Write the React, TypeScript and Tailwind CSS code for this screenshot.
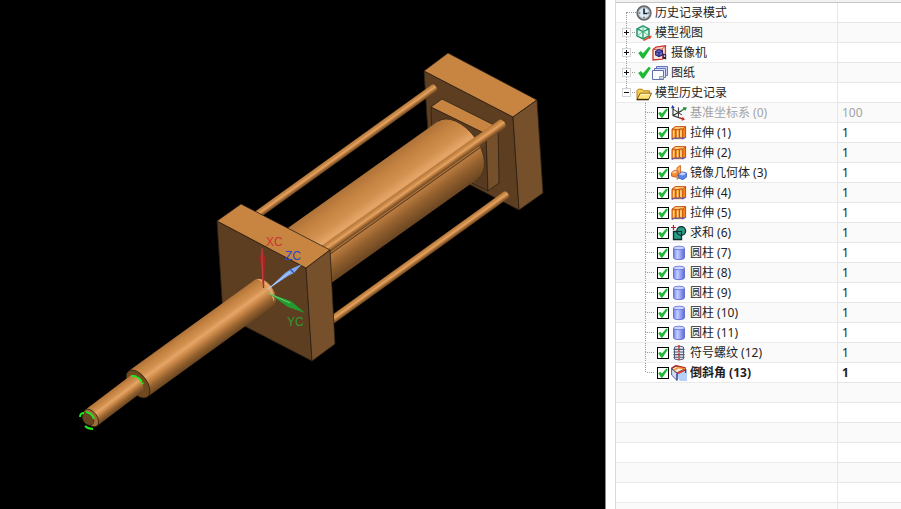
import { ReactNode, useState } from "react";

type IconName =
  | "clock"
  | "views"
  | "camera"
  | "sheets"
  | "folder"
  | "csys"
  | "extrude"
  | "mirror"
  | "unite"
  | "cylinder"
  | "thread"
  | "chamfer";

interface RootNode {
  label: string;
  icon: IconName;
  expander?: "+" | "-";
  ticked?: boolean;
}

interface Feature {
  label: string;
  icon: IconName;
  value: string;
  muted?: boolean;
  current?: boolean;
}

const rootNodes: RootNode[] = [
  { label: "历史记录模式", icon: "clock" },
  { label: "模型视图", icon: "views", expander: "+" },
  { label: "摄像机", icon: "camera", expander: "+", ticked: true },
  { label: "图纸", icon: "sheets", expander: "+", ticked: true },
  { label: "模型历史记录", icon: "folder", expander: "-" },
];

const features: Feature[] = [
  { label: "基准坐标系 (0)", icon: "csys", value: "100", muted: true },
  { label: "拉伸 (1)", icon: "extrude", value: "1" },
  { label: "拉伸 (2)", icon: "extrude", value: "1" },
  { label: "镜像几何体 (3)", icon: "mirror", value: "1" },
  { label: "拉伸 (4)", icon: "extrude", value: "1" },
  { label: "拉伸 (5)", icon: "extrude", value: "1" },
  { label: "求和 (6)", icon: "unite", value: "1" },
  { label: "圆柱 (7)", icon: "cylinder", value: "1" },
  { label: "圆柱 (8)", icon: "cylinder", value: "1" },
  { label: "圆柱 (9)", icon: "cylinder", value: "1" },
  { label: "圆柱 (10)", icon: "cylinder", value: "1" },
  { label: "圆柱 (11)", icon: "cylinder", value: "1" },
  { label: "符号螺纹 (12)", icon: "thread", value: "1" },
  { label: "倒斜角 (13)", icon: "chamfer", value: "1", current: true },
];

const emptyRows = [0, 1, 2, 3, 4, 5, 6];

const iconShapes: Record<IconName, ReactNode> = {
  clock: (
    <>
      <circle cx="8" cy="8" r="6.7" fill="#dcebf5" stroke="#6a6d70" strokeWidth="2" />
      <circle cx="8" cy="8" r="5.4" fill="none" stroke="#aeb9c1" strokeWidth="0.8" />
      <path d="M8 2.8v1.6M8 11.6v1.6M2.8 8h1.6M11.6 8h1.6" stroke="#444" strokeWidth="1" />
      <path d="M8 4V8.5h3.4" fill="none" stroke="#14283c" strokeWidth="1.6" />
    </>
  ),
  views: (
    <>
      <path d="M7 .9l6 3v7l-6 3-6-3v-7z" fill="#e0f8ec" stroke="#219467" strokeWidth="1.5" />
      <path d="M1 3.9l6 2.6 6-2.6M7 6.5v7.4" fill="none" stroke="#219467" strokeWidth="1.3" />
      <path d="M7 .9v5.6M1 10.9l6-4.4 6 4.4" fill="none" stroke="#4fb48b" strokeWidth="0.8" />
      <path d="M7.5 15.4l6-3" stroke="#e0402a" strokeWidth="1.6" />
      <path d="M11.6 11.3l4.4-.6-2.2 3.5z" fill="#e0402a" />
    </>
  ),
  camera: (
    <>
      <path d="M1 4.6L4 2l9.4-1.2v10.6l-3 2.8L1 15z" fill="#fdeae6" stroke="#c9382b" strokeWidth="1.3" />
      <path d="M1 4.6l9.4-.6 3-3.2M10.4 4v9.8" fill="none" stroke="#d64a3a" strokeWidth="1" />
      <path d="M3.6 6.4l3-1.8 4 1.4v3.8L7 11.6l-3.4-1.8z" fill="#6c6cc6" stroke="#29297c" strokeWidth="1.1" />
      <path d="M3.6 6.4L7 8l3.6-2M7 8v3.6" fill="none" stroke="#1e1e66" strokeWidth="0.9" />
      <path d="M10.6 8.6l3.6.8v5l-3.6-.8z" fill="#2a2340" />
      <path d="M11.8 10.2l1.4.3v1.4l-1.4-.3z" fill="#fff" />
    </>
  ),
  sheets: (
    <>
      <path d="M4.5 1.5h11v9h-11z" fill="#c9d3f3" stroke="#6474b8" />
      <path d="M2.5 3.5h11v9h-11z" fill="#dde4fa" stroke="#6474b8" />
      <path d="M.5 5.5h11v9H.5z" fill="#fafbff" stroke="#5e6eb2" />
      <path d="M7.5 14v-2.5h4V14z" fill="#cfe2d8" stroke="#7b8cae" strokeWidth="0.8" />
    </>
  ),
  folder: (
    <>
      <path d="M1 14V5.4l1.2-1.2h4l1.2 1.6h6v2.4" fill="#f7cf52" stroke="#b5801a" strokeWidth="1" />
      <path d="M1 14.4l3.2-6.2h11.4l-3 6.2z" fill="#ffe27a" stroke="#8a5b0c" strokeWidth="1" />
      <path d="M4.8 9.4h8.6" stroke="#fff8cf" strokeWidth="1.1" />
      <path d="M.6 14.6h12.2" stroke="#3f2a08" strokeWidth="1.4" />
    </>
  ),
  csys: (
    <>
      <path d="M2 2v8.6l8 2.9M2 10.6l9-5" fill="none" stroke="#2a2f2a" strokeWidth="1.1" />
      <path d="M2 4l5.4 3.6v4.6M7.4 2.4v5.2M7.4 7.6l3.6 2.4" fill="none" stroke="#333" strokeWidth="1" />
      <path d="M0 3.2L1.6 0l2 3z" fill="#2634b8" />
      <path d="M10.5 5.6l4-2.4M12 3l2.9 0-.9 2.2" fill="none" stroke="#23923e" strokeWidth="1.3" />
      <path d="M8.8 12.8l3.8 1.4M10.6 15.2l2.3-1-1.4-1.8" fill="none" stroke="#c72c24" strokeWidth="1.3" />
    </>
  ),
  extrude: (
    <>
      <path d="M1 4l3.2-2.6h10.6L14 12.8l-2.6 1.4H1z" fill="#f58a1f" />
      <path d="M1.6 4.2l2.8-2.2h9.8l-2.4 1.8z" fill="#ffcf7c" />
      <path d="M2.6 5.4v7M6.6 5.2v7M10 5.2v7" stroke="#ffd98a" strokeWidth="1.6" />
      <path d="M1 4.2v10M4.8 4.4V13M8.4 4.2V13M11.8 4v9.4M14.6 1.8v10.8" stroke="#c04e0e" strokeWidth="1" />
      <path d="M1 4.2l3.2-2.6h10.4l-2.8 2.4q-1.6-.6-3.4.2-1.8.8-3.6.2-1.8-.6-3.8-.2z" fill="none" stroke="#c04e0e" strokeWidth="0.9" />
      <path d="M.8 14.6q2-1.8 4-1.4 1.8.4 3.6-.2 1.8-.6 3.4.8l2.8-1.6" fill="none" stroke="#5557b4" strokeWidth="1.3" />
    </>
  ),
  mirror: (
    <>
      <path d="M6 2.8L9.4.4v10.8L6 14.4z" fill="#ffb566" stroke="#d9691c" strokeWidth="1" />
      <path d="M.4 7.8l3-2.4 3.8.8v4l-3 2-3.8-1.2z" fill="#f58b2e" stroke="#b9501a" strokeWidth="0.8" />
      <path d="M.8 7.9l2.8-2 3 .7-2.6 2z" fill="#ffd09a" />
      <path d="M7.6 9.4l3.2-2.6 4.8 1.2v4l-3.6 2.6-4.4-1.4z" fill="#5b84e6" stroke="#3355b6" strokeWidth="0.8" />
      <path d="M7.9 9.5l3-2.3 4.3 1.1L12 10.6z" fill="#c3d6ff" />
    </>
  ),
  unite: (
    <>
      <path d="M2.5 6.5h8v8h-8z" fill="#2a9a86" stroke="#0c2f2b" strokeWidth="1.3" />
      <circle cx="10.2" cy="6" r="4.4" fill="#2a9a86" stroke="#0c2f2b" strokeWidth="1.3" />
      <path d="M5.8 6.5h4.7v3.9" fill="none" stroke="#0c2f2b" strokeWidth="1.1" />
      <path d="M0 2.5h5M2.5 0v5" stroke="#c01f2e" strokeWidth="1.2" />
    </>
  ),
  cylinder: (
    <>
      <path d="M2.5 3v9.8c0 2.4 11 2.4 11 0V3z" fill="url(#icon-cylinder)" stroke="#6169cf" strokeWidth="0.9" />
      <ellipse cx="8" cy="3" rx="5.5" ry="1.8" fill="#ccd5ff" stroke="#6d78d8" strokeWidth="0.9" />
    </>
  ),
  thread: (
    <>
      <path d="M3.5 2q4.500-2 9 0v12q-4.500 2-9 0z" fill="#e4eaf2" stroke="#55657c" strokeWidth="1" />
      <path d="M2.4 4.4h11.2M2.400 7h11.2M2.400 9.600h11.2M2.400 12.200h11.2" stroke="#4d5b74" strokeWidth="1.100" />
      <path d="M8 0v16" stroke="#d5302c" strokeWidth="1.4" strokeDasharray="4 1 2 1" />
    </>
  ),
  chamfer: (
    <>
      <path d="M5 9l11-5v12H9z" fill="#b4d0fb" />
      <path d="M.6 3.600L6 8v7.400L.600 10z" fill="#d3dcf2" stroke="#44508c" strokeWidth="0.9" />
      <path d="M.6 3.6L5 1l9.600 2.400L6 8z" fill="#f6e4d2" stroke="#2d2d4a" strokeWidth="0.9" />
      <path d="M.2 3.400L4.800.6l9.800 2.400" fill="none" stroke="#b32c24" strokeWidth="1.3" />
      <path d="M2.600 5.200L7.400 2.600l7 1.400" fill="none" stroke="#f0912e" strokeWidth="1.4" />
      <path d="M6 8.600l8.800-3.800" stroke="#d8392a" strokeWidth="1.7" />
      <path d="M6 9v6.600M14.600 4v4" stroke="#2b3c98" strokeWidth="1.1" />
    </>
  ),
};

const NodeIcon = ({ name }: { name: IconName }) => (
  <svg viewBox="0 0 16 16" className="size-4 shrink-0" aria-hidden="true">
    {iconShapes[name]}
  </svg>
);

const Tick = ({ className }: { className: string }) => (
  <svg viewBox="0 0 12 12" className={className} aria-hidden="true">
    <path d="M.2 6.400L2.600 4.600l2 2L10 .6l1.800 1.200L5.400 11.600H3.800z" fill="#1fb937" />
  </svg>
);

const DottedColumn = ({ className }: { className: string }) => (
  <span
    className={`${className} w-px bg-[repeating-linear-gradient(to_bottom,#9a9a9a_0_1px,transparent_1px_2px)]`}
  />
);

const DottedRow = ({ className }: { className: string }) => (
  <span
    className={`${className} h-px bg-[repeating-linear-gradient(to_right,#9a9a9a_0_1px,transparent_1px_2px)]`}
  />
);

interface TreeRowProps {
  children?: ReactNode;
  value?: string;
  textStyle?: string;
}

const TreeRow = ({ children, value, textStyle = "" }: TreeRowProps) => (
  <tr className={`odd:bg-white even:bg-[#fafafa] ${textStyle}`}>
    <td className="border-b border-[#ebebeb] p-0">
      <div className="flex h-[19px] items-center">{children}</div>
    </td>
    <td className="border-b border-l border-[#e6e6e6] py-0 pr-0 pl-1">{value}</td>
  </tr>
);

const RootRow = ({ node, first, last }: { node: RootNode; first: boolean; last: boolean }) => {
  const [open, setOpen] = useState(node.expander === "-");

  return (
    <TreeRow>
      <span className="ml-1.5 flex h-full w-[9px] shrink-0 flex-col items-center">
        <DottedColumn className={first ? "flex-1 invisible" : "flex-1"} />
        {node.expander ? (
          <button
            type="button"
            aria-label={node.label}
            aria-expanded={open}
            onClick={() => setOpen(!open)}
            className="flex size-[9px] items-center justify-center border border-[#d4d4d4] bg-white"
          >
            <svg viewBox="0 0 5 5" className="size-[5px]" aria-hidden="true" shapeRendering="crispEdges">
              <path d={open ? "M0 2h5v1H0z" : "M0 2h5v1H0zM2 0h1v5H2z"} fill="#111" />
            </svg>
          </button>
        ) : (
          <DottedColumn className="h-px" />
        )}
        <DottedColumn className={last ? "flex-1 invisible" : "flex-1"} />
      </span>
      {node.expander ? <DottedRow className="mr-px ml-px w-[3px]" /> : <DottedRow className="-ml-1 w-[9px]" />}
      {node.ticked && (
        <span className="flex w-4 shrink-0 justify-center">
          <Tick className="h-[13px] w-[13px]" />
        </span>
      )}
      <NodeIcon name={node.icon} />
      <span className="pl-[3px] whitespace-nowrap">{node.label}</span>
    </TreeRow>
  );
};

const FeatureRow = ({ feature, last }: { feature: Feature; last: boolean }) => (
  <TreeRow
    value={feature.value}
    textStyle={feature.muted ? "text-[#a3a3a3]" : feature.current ? "font-bold" : ""}
  >
    <span className="ml-[29px] flex h-full w-px shrink-0 flex-col">
      <DottedColumn className="h-[10px]" />
      {!last && <DottedColumn className="-mt-px flex-1 pt-px" />}
    </span>
    <DottedRow className="ml-px w-2" />
    <label className="ml-0.5 flex items-center">
      <span className="grid size-3 shrink-0 place-items-center">
        <input
          type="checkbox"
          defaultChecked
          className="peer col-start-1 row-start-1 size-3 appearance-none border border-black bg-white"
        />
        <Tick className="pointer-events-none invisible col-start-1 row-start-1 size-2.5 peer-checked:visible" />
      </span>
      <span className="ml-0.5 shrink-0">
        <NodeIcon name={feature.icon} />
      </span>
      <span className="pl-[3px] whitespace-nowrap">{feature.label}</span>
    </label>
  </TreeRow>
);

interface ShaftProps {
  from: [number, number];
  to: [number, number];
  r: number;
  outline?: boolean;
}

// Round bar drawn along its own axis; the far end is an ellipse, the near end is cut flat.
const Shaft = ({ from, to, r, outline }: ShaftProps) => {
  const dx = to[0] - from[0];
  const dy = to[1] - from[1];
  const length = Math.hypot(dx, dy);
  const angle = (Math.atan2(dy, dx) * 180) / Math.PI;

  return (
    <g transform={`translate(${from[0]} ${from[1]}) rotate(${angle})`}>
      <ellipse
        cx={length}
        rx={r * 0.6}
        ry={r}
        fill="url(#bronze)"
        stroke={outline ? "#3a2918" : "none"}
        strokeWidth="0.7"
      />
      <rect y={-r} width={length} height={r * 2} fill="url(#bronze)" />
    </g>
  );
};

const ModelView = () => (
  <svg
    viewBox="0 0 605 509"
    preserveAspectRatio="xMinYMin meet"
    className="block h-full w-full"
    role="img"
    aria-label="Cylinder assembly"
  >
    <defs>
      <linearGradient id="bronze" x1="0" y1="0" x2="0" y2="1">
        <stop offset="0" stopColor="#ae7238" />
        <stop offset="0.15" stopColor="#c48241" />
        <stop offset="0.34" stopColor="#d2914f" />
        <stop offset="0.46" stopColor="#e5a567" />
        <stop offset="0.6" stopColor="#cb8848" />
        <stop offset="0.8" stopColor="#95612e" />
        <stop offset="1" stopColor="#6a4622" />
      </linearGradient>
      <linearGradient id="icon-cylinder">
        <stop offset="0" stopColor="#6f7df0" />
        <stop offset="0.35" stopColor="#c6d0ff" />
        <stop offset="1" stopColor="#5966dd" />
      </linearGradient>
    </defs>

    {/* rear cap */}
    <g stroke="#2b2015" strokeWidth="0.8" strokeLinejoin="round">
      <path d="M424 71L513 117l6 93-89-46z" fill="#5d3e20" />
      <path d="M424 71l24-18 89 47-24 17z" fill="#c78541" />
      <path d="M513 117l24-17 6 93-24 17z" fill="#75502a" />
      <path d="M431 107l55 27 2 57-55-27z" fill="#573a1f" />
      <path d="M431 107l11-8 56 28-12 7z" fill="#c78541" />
      <path d="M486 134l12-7 1 56-11 8z" fill="#75502a" />
    </g>

    {/* barrel and tie rods */}
    <Shaft from={[250, 220]} to={[434, 88]} r={4} />
    <Shaft from={[285, 273]} to={[458, 150]} r={35} outline />
    <path d="M330 254l155-110" stroke="#6a4522" strokeWidth="1.4" />
    <Shaft from={[316, 256]} to={[502, 124]} r={5} />
    <Shaft from={[325, 325]} to={[506, 195]} r={4} />

    {/* front cap */}
    <g stroke="#2b2015" strokeWidth="0.8" strokeLinejoin="round">
      <path d="M217 221l89 47 6 93-89-46z" fill="#5d3e20" />
      <path d="M217 221l24-17 89 46-24 18z" fill="#c78541" />
      <path d="M306 268l24-18 5 94-23 17z" fill="#75502a" />
    </g>

    {/* piston rod */}
    <Shaft from={[138, 384]} to={[264, 293]} r={16} />
    <path d="M257 279q7-1 12 6 6 8 5 17-3-10-7-14-3-6-10-9z" fill="#e5a768" />
    <ellipse cx="138" cy="384" rx="9" ry="16" transform="rotate(-36 138 384)" fill="#71491f" stroke="#2b2015" strokeWidth="0.8" />
    <Shaft from={[91, 418]} to={[136, 384]} r={10} />
    <path d="M131 376q8-1 12 8" fill="none" stroke="#1eea1e" strokeWidth="2" strokeDasharray="6 1" />
    <ellipse cx="91" cy="418" rx="6" ry="10" transform="rotate(-36 91 418)" fill="#a06b35" stroke="#2b2015" strokeWidth="0.8" />
    <ellipse cx="88" cy="419" rx="5" ry="7" transform="rotate(-36 88 419)" fill="#68431f" stroke="#2b2015" strokeWidth="0.6" />
    <path d="M80 417q0-4 4-4M86 412q6 1 8 7M85 426q3 3 8 3" fill="none" stroke="#1eea1e" strokeWidth="1.8" />

    {/* work coordinate system */}
    <path d="M262 248l3 10-1 30h-1l-3-30z" fill="#a92424" />
    <path d="M262 248l0 10 1 28" fill="none" stroke="#d95555" strokeWidth="0.6" />
    <path d="M267 290l18-17 6-4 11-5-8 9-6 3z" fill="#7fa6ee" />
    <path d="M268 289l22-17" stroke="#c8dcff" strokeWidth="0.9" />
    <path d="M290 269l4 4" stroke="#3657b0" strokeWidth="1.3" />
    <path d="M268 293l23 8 14 12-17-6z" fill="#239a2e" />
    <path d="M268 293l22 10" stroke="#8be08f" strokeWidth="0.8" />
    <g className="font-['Liberation_Sans',Arial,sans-serif] text-[12px]">
      <text x="266" y="246" fill="#cc3434">XC</text>
      <text x="285" y="260" fill="#2c46c8">ZC</text>
      <text x="287" y="326" fill="#2f9a35">YC</text>
    </g>
  </svg>
);

const PartNavigator = () => (
  <aside className="w-[286px] shrink-0 overflow-hidden border-l border-[#d9d9d9] bg-white">
    <div className="h-[3px] border-b border-[#c6c6c6] bg-[#f1f1f1]" />
    <table className="w-full table-fixed border-separate border-spacing-0">
      <colgroup>
        <col />
        <col className="w-16" />
      </colgroup>
      <tbody>
        {rootNodes.map((node, i) => (
          <RootRow key={node.label} node={node} first={i === 0} last={i === rootNodes.length - 1} />
        ))}
        {features.map((feature, i) => (
          <FeatureRow key={feature.label} feature={feature} last={i === features.length - 1} />
        ))}
        {emptyRows.map((row) => (
          <TreeRow key={row} />
        ))}
      </tbody>
    </table>
  </aside>
);

export default function App() {
  return (
    <div className="flex h-screen overflow-hidden bg-white font-['Noto_Sans','Noto_Sans_CJK_SC',sans-serif] text-[12px] leading-[19px] text-[#1e1e1e]">
      <main className="mr-[9px] min-w-0 flex-1 border-r border-[#8c8c8c] bg-black">
        <ModelView />
      </main>
      <PartNavigator />
    </div>
  );
}
